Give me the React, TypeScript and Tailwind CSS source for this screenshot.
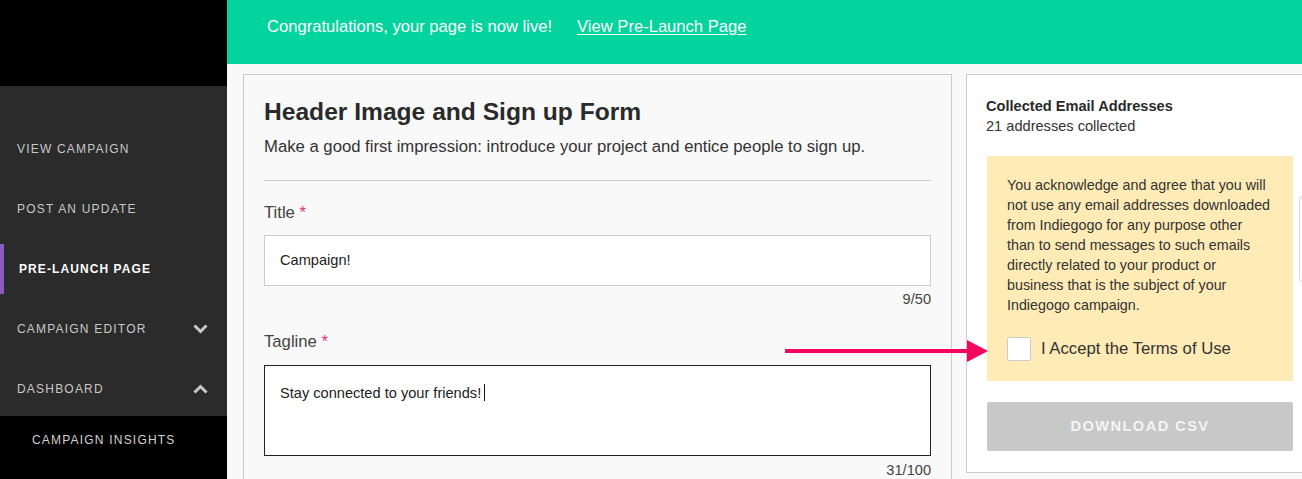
import React from 'react';

const font = { fontFamily: '"Liberation Sans", Arial, sans-serif' };

type NavItemProps = {
  label: string;
  active?: boolean;
  icon?: React.ReactNode;
};

const Chevron = ({ up = false }: { up?: boolean }) => (
  <svg width="15" height="10" viewBox="0 0 15 10" className="text-[#c8c8c8]">
    <polyline
      points={up ? '1.5,8.5 7.5,2.5 13.5,8.5' : '1.5,1.5 7.5,7.5 13.5,1.5'}
      fill="none"
      stroke="currentColor"
      strokeWidth="3"
    />
  </svg>
);

const NavItem = ({ label, active = false, icon }: NavItemProps) => (
  <div className="relative flex h-[50px] items-center justify-between pl-[17px] pr-[19px]">
    {active && <span className="absolute left-0 top-0 h-full w-[4px] bg-[#8a5cc2]" />}
    <span
      className={
        active
          ? 'pl-[2px] text-[12px] font-bold tracking-[0.09em] text-white'
          : 'text-[12px] tracking-[0.1em] text-[#c8c8c8]'
      }
    >
      {label}
    </span>
    {icon}
  </div>
);

const Sidebar = () => (
  <aside className="flex w-[227px] shrink-0 flex-col bg-[#2b2b2b]">
    <div className="h-[86px] bg-black" />
    <nav className="flex flex-col gap-[10px] pt-[38px]">
      <NavItem label="VIEW CAMPAIGN" />
      <NavItem label="POST AN UPDATE" />
      <NavItem label="PRE-LAUNCH PAGE" active />
      <NavItem label="CAMPAIGN EDITOR" icon={<Chevron />} />
      <NavItem label="DASHBOARD" icon={<Chevron up />} />
    </nav>
    <div className="mt-[2px] flex-1 bg-black pl-[32px] pt-[11px]">
      <span className="text-[12px] leading-[16px] tracking-[0.1em] text-[#d0d0d0]">CAMPAIGN INSIGHTS</span>
    </div>
  </aside>
);

const Banner = () => (
  <div className="flex h-[64px] shrink-0 items-start gap-[25px] bg-[#03d39c] pl-[40px] pt-[15px] text-[16.6px] text-white">
    <span>Congratulations, your page is now live!</span>
    <a className="underline underline-offset-2">View Pre-Launch Page</a>
  </div>
);

const FormPanel = () => (
  <section className="h-[420px] w-[709px] shrink-0 border border-[#cccccc] bg-[#f9f9f9] px-[20px] pt-[22px]">
    <h1 className="text-[24.6px] font-bold leading-[30px] text-[#2a2a2a]">Header Image and Sign up Form</h1>
    <p className="mt-[8px] text-[16.7px] leading-[24px] text-[#333]">
      Make a good first impression: introduce your project and entice people to sign up.
    </p>
    <div className="mt-[21px] h-px bg-[#cccccc]" />

    <label className="mt-[20px] block text-[16.7px] leading-[24px] text-[#444]">
      Title <span className="text-[#f0306c]">*</span>
    </label>
    <div className="mt-[10px] flex h-[51px] items-center border border-[#cccccc] bg-white px-[15px] text-[14.6px] text-[#222]">
      Campaign!
    </div>
    <div className="mt-[3px] text-right text-[14.6px] leading-[20px] text-[#444]">9/50</div>

    <label className="mt-[21px] block text-[16.7px] leading-[24px] text-[#444]">
      Tagline <span className="text-[#f0306c]">*</span>
    </label>
    <div className="mt-[11px] h-[91px] border border-[#222] bg-white px-[15px] pt-[15px] text-[14.6px] leading-[20px] text-[#222]">
      Stay connected to your friends!
      <span className="ml-[3px] inline-block h-[17px] w-px translate-y-[3px] bg-[#111]" />
    </div>
    <div className="mt-[4px] text-right text-[14.6px] leading-[20px] text-[#444]">31/100</div>
  </section>
);

const termsLines = [
  'You acknowledge and agree that you will',
  'not use any email addresses downloaded',
  'from Indiegogo for any purpose other',
  'than to send messages to such emails',
  'directly related to your product or',
  'business that is the subject of your',
  'Indiegogo campaign.',
];

const EmailPanel = () => (
  <section className="w-[348px] shrink-0 self-start border border-[#cccccc] bg-white px-[20px] pb-[21px] pt-[21px]">
    <h2 className="-ml-px text-[14.6px] font-bold leading-[20px] text-[#2a2a2a]">Collected Email Addresses</h2>
    <p className="-ml-px text-[14.6px] leading-[20px] text-[#333]">21 addresses collected</p>

    <div className="mt-[20px] bg-[#feebb6] px-[20px] pb-[20px] pt-[19px]">
      <p className="whitespace-nowrap text-[14.3px] leading-[20px] text-[#333]">
        {termsLines.map((line) => (
          <span key={line} className="block">
            {line}
          </span>
        ))}
      </p>
      <label className="mt-[22px] flex items-center gap-[10px]">
        <span className="h-[24px] w-[24px] rounded-[2px] border border-[#cccccc] bg-white" />
        <span className="text-[16.7px] leading-[24px] text-[#333]">I Accept the Terms of Use</span>
      </label>
    </div>

    <button className="mt-[21px] flex h-[49px] w-full items-center justify-center rounded-[2px] bg-[#c8c8c8] text-[14.6px] font-bold tracking-[0.1em] text-[#f4f4f4]">
      DOWNLOAD CSV
    </button>
  </section>
);

export default function App() {
  return (
    <div className="relative flex h-[479px] w-[1302px] overflow-hidden bg-[#f9f9f9]" style={font}>
      <Sidebar />
      <main className="flex min-w-0 flex-1 flex-col">
        <Banner />
        <div className="flex gap-[14px] pl-[16px] pt-[10px]">
          <FormPanel />
          <EmailPanel />
        </div>
      </main>

      {/* pink pointer arrow drawn over the page */}
      <svg className="absolute left-[785px] top-[339px]" width="204" height="24" viewBox="0 0 204 24">
        <rect x="0" y="10" width="186" height="4" fill="#f5055f" />
        <polygon points="182,1 203,12 182,23" fill="#f5055f" />
      </svg>

      {/* edge of a popover cut off by the window */}
      <div className="absolute left-[1299px] top-[196px] h-[86px] w-[10px] rounded-l-[3px] border border-[#d8d8d8] bg-white" />
    </div>
  );
}
